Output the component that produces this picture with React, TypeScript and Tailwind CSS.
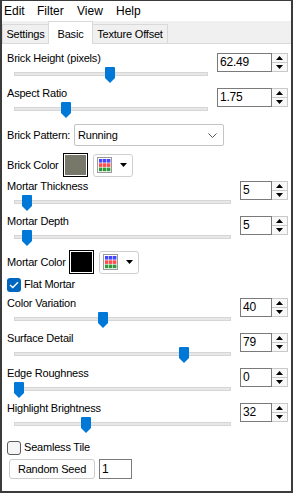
import React from "react";

const GridIcon = () => (
  <svg width="15" height="16" viewBox="0 0 15 16">
    <rect x="0.5" y="0.5" width="14" height="15" fill="#fff" stroke="#9a9a9a" />
    {[0, 1, 2].map((r) =>
      [0, 1, 2].map((c) => (
        <rect
          key={`${r}-${c}`}
          x={2 + c * 4}
          y={2 + r * 4.3}
          width="3.4"
          height="3.6"
          fill={r === 0 ? "#4646ff" : r === 1 ? "#ff4d4d" : "#2f9a3a"}
        />
      )),
    )}
  </svg>
);

const ColorButton = () => (
  <div className="flex h-[23px] w-[40px] items-center gap-[8px] rounded-[3px] border border-[#cfcfcf] bg-white pl-[3px]">
    <GridIcon />
    <svg width="7" height="4" viewBox="0 0 7 4">
      <polygon points="0,0 7,0 3.5,4" fill="#000" />
    </svg>
  </div>
);

function Swatch({ color }: { color: string }) {
  return (
    <div className="h-[24px] w-[25px] border border-black bg-white p-[1px]">
      <div className="h-full w-full" style={{ backgroundColor: color }} />
    </div>
  );
}

function Spin({ value, wide }: { value: string; wide: boolean }) {
  return (
    <div className="flex h-[19px]">
      <div
        className={`${wide ? "w-[55px]" : "w-[32px]"} h-full border border-[#7a7a7a] bg-white pl-[2px] text-[12px] leading-[17px]`}
      >
        {value}
      </div>
      <div className="flex w-[16px] flex-col">
        <div className="flex h-[10px] items-center justify-center border border-l-0 border-[#c9c9c9] bg-[#f8f8f8]">
          <svg width="7" height="4" viewBox="0 0 7 4">
            <polygon points="0,4 3.5,0 7,4" fill="#000" />
          </svg>
        </div>
        <div className="flex h-[9px] items-center justify-center border border-t-0 border-l-0 border-[#c9c9c9] bg-[#f8f8f8]">
          <svg width="7" height="4" viewBox="0 0 7 4">
            <polygon points="0,0 7,0 3.5,4" fill="#000" />
          </svg>
        </div>
      </div>
    </div>
  );
}

function Slider({ pos }: { pos: number }) {
  return (
    <div className="relative ml-[7px] h-[16px]">
      <div className="absolute left-0 right-0 top-[5px] h-[4px] border border-[#d6d6d6] bg-[#e7e7e7]" />
      <svg
        className="absolute top-0"
        style={{ left: pos }}
        width="10"
        height="16"
        viewBox="0 0 10 16"
      >
        <path d="M1 0 H9 Q10 0 10 1 V11 L5 16 L0 11 V1 Q0 0 1 0 Z" fill="#0078d7" />
      </svg>
    </div>
  );
}

function SliderRow({
  label,
  value,
  pos,
  wide = false,
}: {
  label: string;
  value: string;
  pos: number;
  wide?: boolean;
}) {
  return (
    <div className="flex h-[35px] items-start pl-[5px] pr-[3px]">
      <div className="min-w-0 flex-1">
        <div className="h-[17px] leading-[17px]">{label}</div>
        <Slider pos={pos} />
      </div>
      <div className="ml-[9px] mt-[3px]">
        <Spin value={value} wide={wide} />
      </div>
    </div>
  );
}

function Check({ checked, label }: { checked: boolean; label: string }) {
  return (
    <div className="flex h-[15px] items-center pl-[5px]">
      {checked ? (
        <div className="flex h-[14px] w-[14px] items-center justify-center rounded-[3px] bg-[#0067c0]">
          <svg width="10" height="8" viewBox="0 0 10 8">
            <path d="M1 4 L3.8 6.6 L9 1.2" fill="none" stroke="#fff" strokeWidth="1.4" />
          </svg>
        </div>
      ) : (
        <div className="h-[14px] w-[14px] rounded-[3px] border border-[#5a5a5a] bg-[#f6f6f6]" />
      )}
      <span className="ml-[3px]">{label}</span>
    </div>
  );
}

export default function App() {
  return (
    <div className="flex h-[493px] w-[293px] flex-col border-x-2 border-b-2 border-t border-[#3b3b3b] bg-white font-['Liberation_Sans',Arial,sans-serif] text-[11px] tracking-[-0.2px] text-black">
      <div className="flex h-[20px] items-center pl-[2px] text-[12px] tracking-normal">
        <span className="w-[33px]">Edit</span>
        <span className="w-[40px]">Filter</span>
        <span className="w-[39px]">View</span>
        <span>Help</span>
      </div>
      <div className="flex h-[23px] items-end border-b border-[#d9d9d9] bg-[#f0f0f0]">
        <div className="flex h-[19px] w-[47px] items-center justify-center border-x border-t border-[#d9d9d9]">
          Settings
        </div>
        <div className="relative -mb-[1px] -ml-[1px] flex h-[23px] w-[45px] items-start justify-center border-x border-t border-[#d9d9d9] bg-white pt-[4px]">
          Basic
        </div>
        <div className="-ml-[1px] flex h-[19px] w-[76px] items-center justify-center border-x border-t border-[#d9d9d9]">
          Texture Offset
        </div>
      </div>
      <div className="flex flex-1 flex-col pt-[6px]">
        <SliderRow label="Brick Height (pixels)" value="62.49" pos={91} wide />
        <SliderRow label="Aspect Ratio" value="1.75" pos={47} wide />

        <div className="mt-[4px] flex h-[22px] items-center pl-[5px]">
          <span className="w-[67px]">Brick Pattern:</span>
          <div className="flex h-[22px] w-[150px] items-center justify-between rounded-[2px] border border-[#c4c4c4] bg-white pl-[3px] pr-[6px]">
            <span>Running</span>
            <svg width="9" height="5" viewBox="0 0 9 5">
              <path d="M0.5 0.5 L4.5 4.5 L8.5 0.5" fill="none" stroke="#555" />
            </svg>
          </div>
        </div>

        <div className="mt-[7px] flex h-[24px] items-center pl-[5px]">
          <span className="w-[56px]">Brick Color</span>
          <Swatch color="#78786a" />
          <div className="ml-[5px]">
            <ColorButton />
          </div>
        </div>

        <div className="mt-[1px]">
          <SliderRow label="Mortar Thickness" value="5" pos={8} />
          <SliderRow label="Mortar Depth" value="5" pos={8} />
        </div>

        <div className="mt-[2px] flex h-[24px] items-center pl-[5px]">
          <span className="w-[62px]">Mortar Color</span>
          <Swatch color="#000000" />
          <div className="ml-[5px]">
            <ColorButton />
          </div>
        </div>

        <div className="mt-[3px]">
          <Check checked label="Flat Mortar" />
        </div>

        <div className="mt-[3px]">
          <SliderRow label="Color Variation" value="40" pos={84} />
          <SliderRow label="Surface Detail" value="79" pos={165} />
          <SliderRow label="Edge Roughness" value="0" pos={0} />
          <SliderRow label="Highlight Brightness" value="32" pos={67} />
        </div>

        <div className="mt-[5px]">
          <Check checked={false} label="Seamless Tile" />
        </div>

        <div className="mt-[4px] flex items-center pl-[7px]">
          <div className="flex h-[20px] w-[86px] items-center justify-center rounded-[3px] border border-[#cccccc] bg-[#fdfdfd]">
            Random Seed
          </div>
          <div className="ml-[4px] h-[20px] w-[33px] border border-[#7a7a7a] bg-white pl-[2px] text-[12px] leading-[18px]">
            1
          </div>
        </div>
      </div>
    </div>
  );
}
